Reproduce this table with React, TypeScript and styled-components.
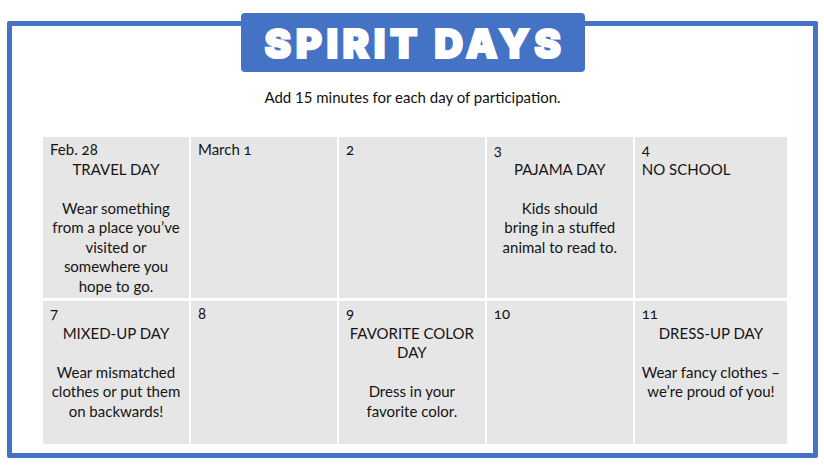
import styled, {createGlobalStyle} from 'styled-components';

interface IDay {
  date: string;
  title?: string[];
  desc?: string[];
  left?: boolean;
}

const days: IDay[] = [
  {date: 'Feb. 28', title: ['TRAVEL DAY'], desc: ['Wear something', 'from a place you\u2019ve', 'visited or', 'somewhere you', 'hope to go.']},
  {date: 'March 1'},
  {date: '2'},
  {date: '3', title: ['PAJAMA DAY'], desc: ['Kids should', 'bring in a stuffed', 'animal to read to.']},
  {date: '4', title: ['NO SCHOOL'], left: true},
  {date: '7', title: ['MIXED-UP DAY'], desc: ['Wear mismatched', 'clothes or put them', 'on backwards!']},
  {date: '8'},
  {date: '9', title: ['FAVORITE COLOR', 'DAY'], desc: ['Dress in your', 'favorite color.']},
  {date: '10'},
  {date: '11', title: ['DRESS-UP DAY'], desc: ['Wear fancy clothes \u2013', 'we\u2019re proud of you!']},
];

const DayCell = ({date, title = [], desc = [], left}: IDay) => (
  <Cell>
    <DateLine>{date}</DateLine>
    {title.map((t) => (
      <Line key={t} $left={left}>{t}</Line>
    ))}
    {desc.length > 0 && <Spacer />}
    {desc.map((d) => (
      <Line key={d}>{d}</Line>
    ))}
  </Cell>
);

const App = (): JSX.Element => {
  return (
    <Page>
      <GlobalStyle />
      <Frame>
        <Banner>SPIRIT DAYS</Banner>
        <Subtitle>Add 15 minutes for each day of participation.</Subtitle>
        <Calendar>
          {days.map((d) => (
            <DayCell key={d.date} {...d} />
          ))}
        </Calendar>
      </Frame>
    </Page>
  );
};

export default App;

const GlobalStyle = createGlobalStyle`
  body {
    margin: 0;
    background: #ffffff;
    font-family: Lato, "Open Sans", sans-serif;
  }
`;

const Page = styled.div`
  width: 824px;
  height: 472px;
  padding: 21px 0 0 7px;
  box-sizing: border-box;
`;

const Frame = styled.div`
  width: 811px;
  height: 437px;
  box-sizing: border-box;
  border: 5px solid #4472c4;
  border-radius: 2px;
  display: flex;
  flex-direction: column;
  align-items: center;
`;

const Banner = styled.div`
  margin-top: -13px;
  width: 344px;
  height: 59px;
  border-radius: 4px;
  background: #4472c4;
  color: #ffffff;
  display: flex;
  align-items: center;
  justify-content: center;
  font-family: Inter, Roboto, sans-serif;
  font-weight: 900;
  font-size: 40px;
  letter-spacing: 4.5px;
  padding: 2px 0 0 5px;
  box-sizing: border-box;
  -webkit-text-stroke: 2px #ffffff;
`;

const Subtitle = styled.div`
  margin-top: 15px;
  font-size: 15px;
  line-height: 20px;
  color: #111111;
`;

const Calendar = styled.div`
  align-self: flex-start;
  margin: 30px 0 0 31px;
  width: 744px;
  display: grid;
  grid-template-columns: repeat(5, 1fr);
  grid-template-rows: 161px 143px;
  column-gap: 2px;
  row-gap: 3px;
`;

const Cell = styled.div`
  background: #e7e6e6;
  padding: 3px 7px;
  font-size: 15px;
  line-height: 19.5px;
  color: #141414;
  font-variant-numeric: oldstyle-nums;
`;

const DateLine = styled.div`
  text-align: left;
`;

const Line = styled.div<{$left?: boolean}>`
  text-align: ${({$left}) => ($left ? 'left' : 'center')};
  white-space: nowrap;
`;

const Spacer = styled.div`
  height: 19.5px;
`;
